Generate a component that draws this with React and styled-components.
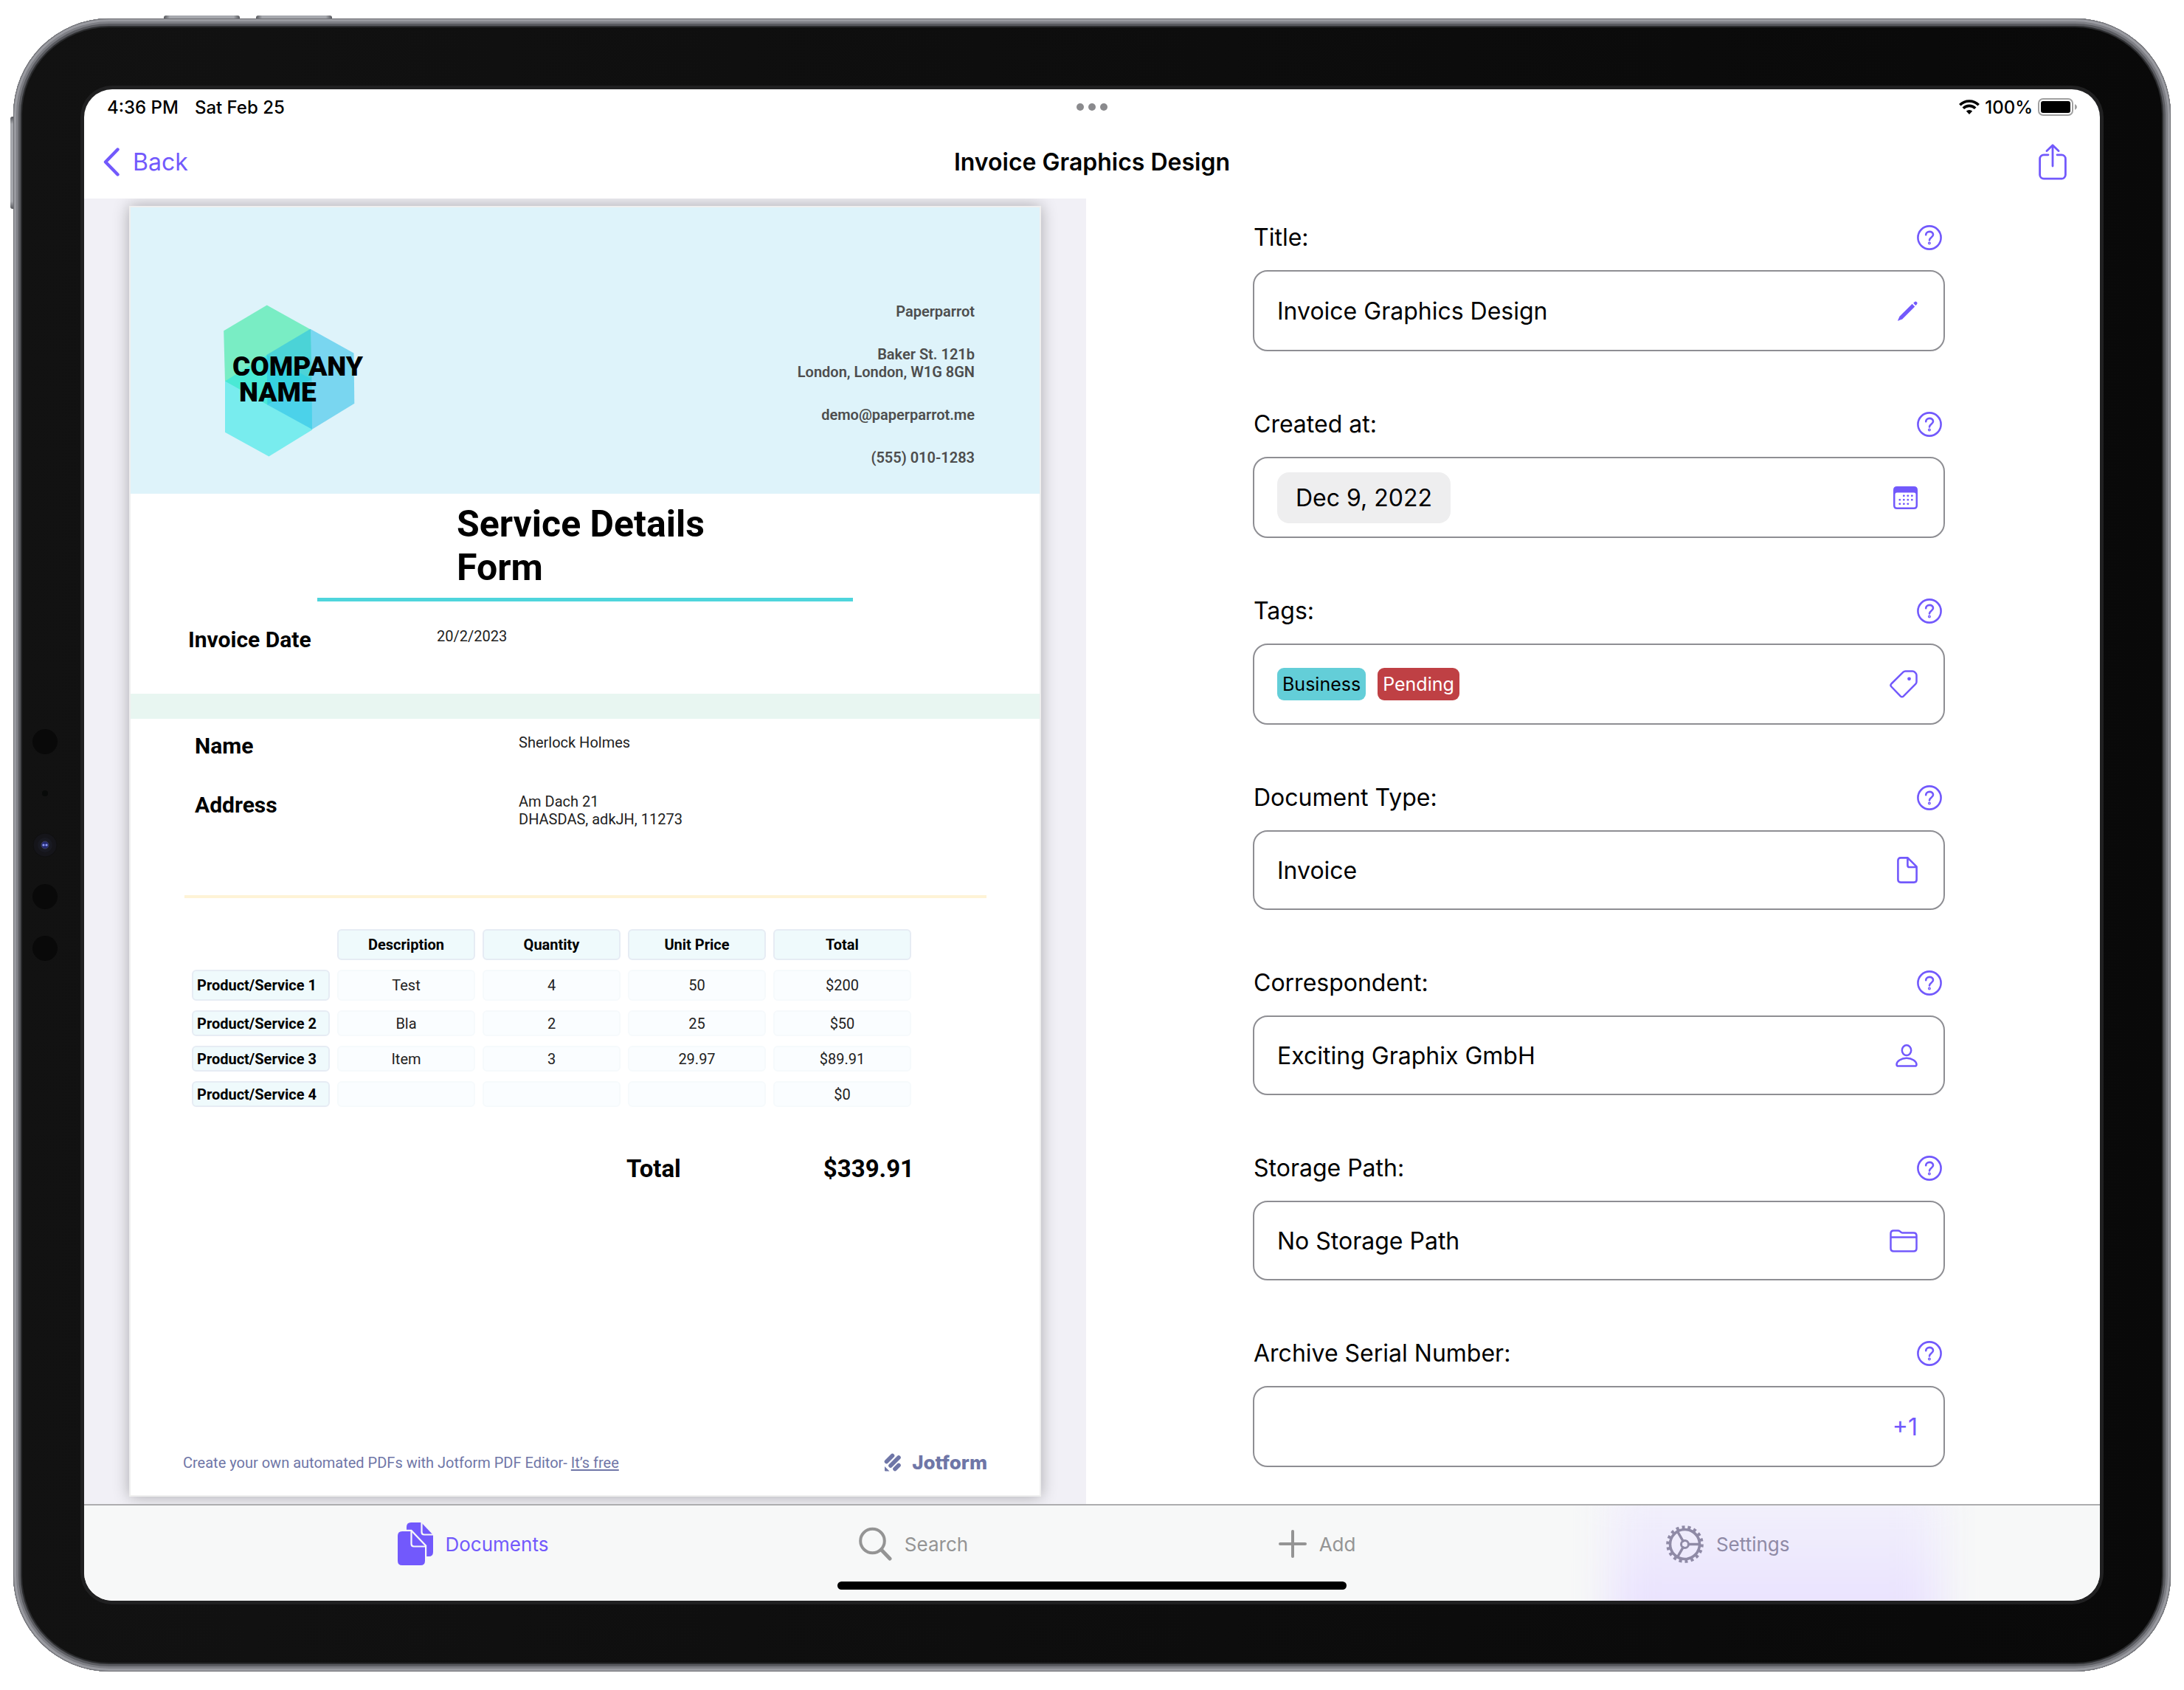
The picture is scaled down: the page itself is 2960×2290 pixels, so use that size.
import React from "react";
import styled, { createGlobalStyle, css } from "styled-components";

const violet = "#7259fc";
const sans = `Inter, "Liberation Sans", sans-serif`;
const print = `Roboto, "Liberation Sans", sans-serif`;

const Global = createGlobalStyle`
  *, *::before, *::after { box-sizing: border-box; }
  body { margin: 0; background: #fff; font-family: ${sans}; color: #000; }
  button, input, select { font: inherit; color: inherit; margin: 0; }
  h1, h2, p, dl, dd, dt { margin: 0; font-weight: inherit; font-size: inherit; }
`;

const plainControl = css`
  appearance: none;
  border: 0;
  padding: 0;
  background: none;
`;

/* ---------- Device ---------- */

const Device = styled.div`
  position: relative;
  display: flex;
  margin: 25px 18px;
  min-height: calc(100vh - 50px);
  padding: 96px;
  border-radius: 130px;
  background: linear-gradient(90deg, #121212, #0e0e0e 45%, #090909);
  box-shadow:
    inset 0 0 0 1px #707176,
    inset 0 0 0 4px #9a9ba1,
    inset 0 0 0 7px #7e7f85,
    inset 0 0 0 10px #5a5b60,
    inset 0 0 0 12px #2b2c2e;
`;

const HardwareKey = styled.span`
  position: absolute;
  background: linear-gradient(90deg, #55565b, #a6a8ad 8%, #a6a8ad 92%, #55565b);
  ${(p) =>
    p.$side === "top"
      ? css`top: -4px; left: ${p.$at}px; width: 103px; height: 4px; border-radius: 3px 3px 0 0;`
      : css`left: -4px; top: ${p.$at}px; width: 4px; height: 125px; border-radius: 3px 0 0 3px;
          background: linear-gradient(#55565b, #a6a8ad 8%, #a6a8ad 92%, #55565b);`}
`;

const Sensors = styled.div`
  position: absolute;
  left: 26px;
  top: 50%;
  transform: translateY(-50%);
  display: flex;
  flex-direction: column;
  gap: 36px;
`;

const Screen = styled.div`
  flex: 1;
  min-width: 0;
  display: flex;
  flex-direction: column;
  overflow: hidden;
  border-radius: 38px;
  background: #fff;
`;

const ScreenEdge = styled.div`
  flex: 1;
  min-width: 0;
  display: flex;
  border-radius: 38px;
  box-shadow: 0 0 0 5px #202021;
`;

/* ---------- Bars ---------- */

const StatusBar = styled.header`
  display: grid;
  grid-template-columns: 1fr auto 1fr;
  align-items: center;
  height: 48px;
  padding: 0 31px;
  font-size: 24px;
  font-weight: 500;
`;

const Cluster = styled.div`
  display: flex;
  align-items: center;
  gap: ${(p) => p.$gap}px;
  justify-self: ${(p) => p.$side || "start"};
`;

const NavBar = styled.nav`
  display: grid;
  grid-template-columns: 1fr auto 1fr;
  align-items: center;
  height: 100px;
  padding: 0 26px;
  font-size: 32px;
`;

const BackButton = styled.button`
  ${plainControl}
  display: flex;
  align-items: center;
  gap: 18px;
  color: ${violet};
`;

const NavTitle = styled.h1`
  && { font-size: 32px; font-weight: 600; }
`;

const IconButton = styled.button`
  ${plainControl}
  display: flex;
  justify-self: end;
  color: ${violet};
`;

const ShareButton = styled(IconButton)`
  margin-right: 19px;
`;

const Body = styled.main`
  flex: 1;
  display: grid;
  grid-template-columns: 1358fr 1374fr;
`;

/* ---------- Document preview ---------- */

const Preview = styled.section`
  display: flex;
  padding: 10px 61px;
  background: #f1f0f6;
  overflow: hidden;
`;

const Sheet = styled.article`
  flex: 1;
  min-width: 0;
  display: flex;
  flex-direction: column;
  border: 2px solid #efefef;
  background: #fff;
  box-shadow: 0 0 20px rgba(0, 0, 0, 0.3);
  font-family: ${print};
  font-size: 20px;
  line-height: 24px;
`;

const Letterhead = styled.div`
  display: flex;
  justify-content: space-between;
  padding: 129px 88px 37px 126px;
  background: #def3fa;
`;

const Logo = styled.div`
  position: relative;
  width: 190px;
  height: 210px;
`;

const LogoText = styled.p`
  position: absolute;
  left: 12px;
  top: 69px;
  display: flex;
  flex-direction: column;
  font-weight: 900;
  font-size: 37px;
  line-height: 35px;
`;

const LogoLine = styled.span`
  padding-left: ${(p) => (p.$indent ? 9 : 0)}px;
`;

const Contact = styled.address`
  display: flex;
  flex-direction: column;
  gap: 34px;
  font-style: normal;
  font-weight: 600;
  text-align: right;
  color: #4d4d4d;
`;

const TitleBlock = styled.div`
  align-self: center;
  width: 726px;
  padding: 12px 0 11px;
  border-bottom: 5px solid #4fd5dc;
`;

const SheetTitle = styled.h2`
  && {
    width: 348px;
    margin: 0 auto;
    font-size: 50px;
    line-height: 59px;
    font-weight: 700;
  }
`;

const Details = styled.dl`
  display: grid;
  grid-template-columns: ${(p) => p.$term}px 1fr;
  row-gap: 46px;
  padding: ${(p) => p.$pad};
`;

const Term = styled.dt`
  && { font-size: 30px; line-height: 34px; font-weight: 700; }
`;

const Value = styled.dd`
  color: #222;
`;

const Band = styled.div`
  height: 34px;
  background: #e8f6f1;
`;

const YellowRule = styled.hr`
  height: 4px;
  margin: 91px 72px 0 73px;
  border: 0;
  background: #fef3d6;
`;

const Items = styled.table`
  width: 995px;
  margin: 29px 0 0 73px;
  table-layout: fixed;
  border-collapse: separate;
  border-spacing: 10px 13px;

  tr { height: 35px; }
  tr.tall { height: 42px; }
  th, td {
    padding: 0;
    border: 2px solid #f6fafc;
    border-radius: 6px;
    background: #fafdff;
    text-align: center;
    vertical-align: middle;
    line-height: 24px;
    font-weight: 400;
    color: #222;
    white-space: nowrap;
  }
  th { background: #effafc; border-color: #e6ecf4; font-weight: 700; color: #000; }
  th[scope="row"] { padding-left: 5px; text-align: left; }
  td.blank { border-color: transparent; background: none; }
`;

const GrandTotal = styled.p`
  display: flex;
  justify-content: space-between;
  width: 390px;
  && { margin: 51px 0 0 672px; font-size: 33px; font-weight: 700; }
  line-height: 40px;
`;

const SheetFooter = styled.footer`
  display: flex;
  align-items: center;
  justify-content: space-between;
  margin-top: auto;
  padding: 0 71px 32px;
  color: #6f76a7;
  a { color: inherit; text-underline-offset: 2px; }
`;

const Jotform = styled.div`
  display: flex;
  align-items: center;
  gap: 13px;
  font-family: ${sans};
  font-size: 26px;
  font-weight: 800;
`;

/* ---------- Form ---------- */

const Form = styled.form`
  display: flex;
  flex-direction: column;
  gap: 82px;
  padding: 36px 210px 50px 226px;
  font-size: 32px;
`;

const Field = styled.div`
  display: flex;
  flex-direction: column;
  gap: 27px;
`;

const FieldHead = styled.div`
  display: flex;
  align-items: center;
  justify-content: space-between;
  height: 34px;
  padding: 0 4px 0 1px;
  line-height: 34px;
`;

const Box = styled.div`
  display: flex;
  align-items: center;
  gap: 16px;
  height: ${(p) => (p.$compact ? 108 : 110)}px;
  padding: 0 35px 0 31px;
  border: 2px solid #8e8e93;
  border-radius: 20px;
`;

const Entry = styled.input`
  ${plainControl}
  flex: 1;
  min-width: 0;
  height: 60px;
  outline: 0;
`;

const DateChip = styled.button`
  ${plainControl}
  height: 69px;
  padding: 0 25px;
  border-radius: 16px;
  background: #eeeeef;
`;

const Tag = styled.span`
  padding: 0 7px;
  border-radius: 9px;
  font-size: 25px;
  line-height: 44px;
  background: ${(p) => p.$bg};
  color: ${(p) => p.$fg};
`;

const BoxAction = styled(IconButton)`
  margin-left: auto;
`;

/* ---------- Tab bar ---------- */

const TabBar = styled.nav`
  position: relative;
  display: flex;
  justify-content: space-evenly;
  height: 131px;
  padding-left: 4px;
  border-top: 2px solid #adadaf;
  background: #f7f8f8;
  overflow: hidden;
`;

const Glow = styled.span`
  position: absolute;
  right: 215px;
  top: -30px;
  width: 450px;
  height: 220px;
  background: linear-gradient(#f2f0fb, #efecfc 35%, #eae3fe 70%);
  filter: blur(26px);
`;

const Tab = styled.a`
  position: relative;
  display: flex;
  align-items: center;
  gap: 17px;
  height: 104px;
  font-size: 26px;
  text-decoration: none;
  color: ${(p) => p.$color};
`;

const HomeIndicator = styled.span`
  position: absolute;
  left: 50%;
  bottom: 15px;
  width: 690px;
  height: 11px;
  transform: translateX(-50%);
  border-radius: 6px;
  background: #000;
`;

/* ---------- Icons ---------- */

const Svg = ({ w, h, sw = 3, children }) => (
  <svg width={w} height={h} viewBox={`0 0 ${w} ${h}`} fill="none" stroke="currentColor"
    strokeWidth={sw} strokeLinecap="round" strokeLinejoin="round" aria-hidden="true">
    {children}
  </svg>
);

const SensorDots = () => (
  <>
    {["dot", "mic", "lens", "dot", "dot"].map((kind, i) => (
      <svg key={i} width="34" height="34" viewBox="0 0 34 34" aria-hidden="true">
        {kind === "dot" && <circle cx="17" cy="17" r="17" fill="#090909" />}
        {kind === "mic" && <circle cx="17" cy="17" r="4" fill="#080a09" />}
        {kind === "lens" && (
          <>
            <circle cx="17" cy="17" r="16" fill="#15151a" stroke="#0f0f10" />
            <circle cx="17" cy="17" r="10" fill="#191a22" />
            <circle cx="17" cy="17" r="5" fill="#252a74" stroke="#3a3d55" />
            <circle cx="15" cy="17" r="1.6" fill="#8d9cf5" />
            <circle cx="19" cy="17" r="1.6" fill="#8d9cf5" />
          </>
        )}
      </svg>
    ))}
  </>
);

const Dots = () => (
  <svg width="42" height="10" viewBox="0 0 42 10" fill="#8a8a8d" aria-hidden="true">
    <circle cx="5" cy="5" r="5" /><circle cx="21" cy="5" r="5" /><circle cx="37" cy="5" r="5" />
  </svg>
);

const Wifi = () => (
  <svg width="28" height="20" viewBox="0 0 28 20" fill="none" stroke="#000" strokeWidth="3.6" aria-hidden="true">
    <path d="M1.3 7.2a18 18 0 0 1 25.4 0" />
    <path d="M5.8 11.8a11.6 11.6 0 0 1 16.4 0" />
    <path d="M14 20l-4.2-4.4a6 6 0 0 1 8.4 0z" fill="#000" stroke="none" />
  </svg>
);

const Battery = () => (
  <svg width="53" height="24" viewBox="0 0 53 24" aria-hidden="true">
    <rect x="1" y="1" width="46" height="22" rx="6" fill="none" stroke="#a0a0a0" strokeWidth="2" />
    <rect x="4" y="4" width="40" height="16" rx="3" fill="#000" />
    <path d="M50 8q3 1.5 3 4t-3 4z" fill="#a0a0a0" />
  </svg>
);

const Chevron = () => <Svg w={22} h={39} sw={4.4}><path d="M19.5 2.5 3 19.5l16.5 17" /></Svg>;

const Share = () => (
  <Svg w={38} h={49} sw={2.8}>
    <path d="M13 14.8H7a5.4 5.4 0 0 0-5.4 5.4v21.6A5.4 5.4 0 0 0 7 47.2h24a5.4 5.4 0 0 0 5.4-5.4V20.2A5.4 5.4 0 0 0 31 14.8h-6M19 30V2M11 9.5 19 1.8l8 7.7" />
  </Svg>
);

const Help = () => (
  <Svg w={34} h={34} sw={2.6}>
    <circle cx="17" cy="17" r="15.6" />
    <path d="M12.2 13.2c0-2.5 2-4.3 4.9-4.3s4.9 1.7 4.9 4.2c0 3.7-5 3.7-5 7.4" />
    <circle cx="16.9" cy="24.6" r="0.7" />
  </Svg>
);

const Pencil = () => (
  <svg width="27" height="27" viewBox="0 0 27 27" fill="currentColor" aria-hidden="true">
    <path d="M19.6 3.8 23.200 7.400 6.200 24.400.8 26.600q-.9.300-.6-.6l2.300-5.200z" />
    <path d="m21.200 2.700 1.500-1.400q1.600-1.500 3.100 0t0 3.100l-1.500 1.500z" />
  </svg>
);

const Calendar = () => (
  <svg width="33" height="31" viewBox="0 0 33 31" fill="currentColor" aria-hidden="true">
    <path fillRule="evenodd" d="M5 0h23q5 0 5 5v21q0 5-5 5H5q-5 0-5-5V5Q0 0 5 0zm0 8.5q-2.500 0-2.500 2.300V26q0 2.500 2.500 2.500h23q2.500 0 2.500-2.500V10.800q0-2.300-2.500-2.300z" />
    {[[13, 13], [18.5, 13], [24, 13], [7.5, 18.5], [13, 18.5], [18.5, 18.5], [24, 18.5], [7.5, 24], [13, 24], [18.5, 24]].map(
      ([x, y]) => <rect key={`${x}-${y}`} x={x} y={y - 1.5} width="2.6" height="2.6" rx="0.8" />
    )}
  </svg>
);

const TagIcon = () => (
  <Svg w={38} h={38} sw={2.5}>
    <path d="M21.5 1.5h9.500q2 0 3.200 1.300l1.200 1.400q1.100 1.200 1.100 3v8.600q0 1.800-1.300 3.100L18.800 35.300q-2 2-4 0L2.400 22.500q-1.900-2 0-4L18.500 2.700q1.200-1.200 3-1.200z" />
    <circle cx="26.5" cy="11.8" r="1.6" fill="currentColor" strokeWidth="1.6" />
  </Svg>
);

const DocIcon = () => (
  <Svg w={28} h={36} sw={2.6}>
    <path d="M5 1.4h9.600L26.600 13.400V31q0 3.600-3.600 3.600H5Q1.400 34.600 1.400 31V5Q1.400 1.400 5 1.400zM14.400 1.600v9.800q0 2.600 2.600 2.600h9.400" />
  </Svg>
);

const Person = () => (
  <Svg w={30} h={31} sw={2.5}>
    <ellipse cx="15" cy="8.2" rx="6.2" ry="6.9" />
    <path d="M15 18.800c7.500 0 13.500 4.500 13.500 8.600 0 1.500-.9 2.200-2.300 2.200H3.800c-1.400 0-2.300-.7-2.300-2.200 0-4.100 6-8.600 13.500-8.600z" />
  </Svg>
);

const Folder = () => (
  <Svg w={38} h={31} sw={2.5}>
    <path d="M1.500 10.500h35M5.500 29.500h27q4 0 4-4V8.500q0-4-4-4H17.800q-1.300 0-2.300-.8l-1.600-1.300q-1.100-.9-2.700-.9H5.500q-4 0-4 4v20q0 4 4 4z" />
  </Svg>
);

const DocumentsIcon = () => (
  <svg width="48" height="58" viewBox="0 0 48 58" fill="currentColor" aria-hidden="true">
    <path d="M18 0h14l16 17v23q0 6-6 6H12V6q0-6 6-6z" />
    <path d="M32.5 0v13q0 3.500 3.500 3.500h12" fill="none" stroke="#f7f8f8" strokeWidth="2.2" />
    <path d="M6 12h12l19 20v20q0 6-6 6H6q-6 0-6-6V18q0-6 6-6z" stroke="#f7f8f8" strokeWidth="4.4" paintOrder="stroke" />
    <path d="M18.5 12v17q0 3.500 3.500 3.500h15" fill="none" stroke="#f7f8f8" strokeWidth="2.2" />
  </svg>
);

const SearchIcon = () => (
  <Svg w={45} h={46} sw={4}>
    <circle cx="18.5" cy="19" r="16.3" /><path d="M30.5 31 42 43" strokeWidth="5" />
  </Svg>
);

const Plus = () => <Svg w={38} h={38} sw={4}><path d="M19 2v34M2 19h34" /></Svg>;

const Gear = () => (
  <Svg w={51} h={51} sw={3.6}>
    <circle cx="25.5" cy="25.5" r="20" />
    <circle cx="25.5" cy="25.5" r="23" strokeWidth="4.6" strokeLinecap="butt" pathLength="36" strokeDasharray="1 1" />
    <circle cx="25.5" cy="25.5" r="5" strokeWidth="3" />
    <path d="M30.5 25.5h15M23 21.2l-7.500-13M23 29.800l-7.500 13" strokeWidth="3.4" />
  </Svg>
);

const JotMark = () => (
  <svg width="25" height="25" viewBox="0 0 25 25" fill="none" stroke="currentColor" strokeWidth="5.6" strokeLinecap="round" aria-hidden="true">
    <path d="M3.500 11.500 11.500 3.500M9 17 20 6M15 21.500l5-5" />
    <path d="M1 18v5.500q0 1 1 1h5.500z" fill="currentColor" stroke="none" />
  </svg>
);

const LogoShapes = () => (
  <svg width="190" height="210" viewBox="303 410 190 210" fillOpacity="0.55" aria-hidden="true">
    <path fill="#26e898" d="M361.700 413.600 421 446.500l1.500 67-60 35L305 516.400 303.200 448.200z" />
    <path fill="#25e6e4" d="M305 516.400 362 481l60.500 33 .500 68.500-58.600 36.100L305 585.700z" />
    <path fill="#26bee8" d="m420.600 445.700 58.900 32.900.8 68.200-57.300 35-60.600-33.200-.8-67.900z" />
  </svg>
);

/* ---------- Content ---------- */

const products = [
  ["Product/Service 1", "Test", "4", "50", "$200"],
  ["Product/Service 2", "Bla", "2", "25", "$50"],
  ["Product/Service 3", "Item", "3", "29.97", "$89.91"],
  ["Product/Service 4", "", "", "", "$0"],
];

const FormField = ({ label, id, compact, children }) => (
  <Field>
    <FieldHead>
      <label htmlFor={id}>{label}:</label>
      <IconButton type="button" aria-label={`About ${label}`}><Help /></IconButton>
    </FieldHead>
    <Box $compact={compact}>{children}</Box>
  </Field>
);

const Picker = ({ id, value }) => (
  <Entry as="select" id={id} defaultValue={value}>
    <option>{value}</option>
  </Entry>
);

export default function App() {
  return (
    <>
      <Global />
      <Device>
        <HardwareKey $side="top" $at={204} />
        <HardwareKey $side="top" $at={329} />
        <HardwareKey $side="left" $at={133} />
        <Sensors><SensorDots /></Sensors>
        <ScreenEdge>
          <Screen>
            <StatusBar>
              <Cluster $gap={22}><span>4:36 PM</span><span>Sat Feb 25</span></Cluster>
              <Dots />
              <Cluster $gap={7} $side="end"><Wifi /><span>100%</span><Battery /></Cluster>
            </StatusBar>
            <NavBar>
              <BackButton type="button"><Chevron />Back</BackButton>
              <NavTitle>Invoice Graphics Design</NavTitle>
              <ShareButton type="button" aria-label="Share"><Share /></ShareButton>
            </NavBar>
            <Body>
              <Preview>
                <Sheet>
                  <Letterhead>
                    <Logo>
                      <LogoShapes />
                      <LogoText>
                        <LogoLine>COMPANY</LogoLine>
                        <LogoLine $indent>NAME</LogoLine>
                      </LogoText>
                    </Logo>
                    <Contact>
                      <p>Paperparrot</p>
                      <p>Baker St. 121b<br />London, London, W1G 8GN</p>
                      <p>demo@paperparrot.me</p>
                      <p>(555) 010-1283</p>
                    </Contact>
                  </Letterhead>
                  <TitleBlock><SheetTitle>Service Details Form</SheetTitle></TitleBlock>
                  <Details $term={337} $pad="35px 72px 56px 78px">
                    <Term>Invoice Date</Term><Value>20/2/2023</Value>
                  </Details>
                  <Band />
                  <Details $term={439} $pad="20px 72px 0 87px">
                    <Term>Name</Term><Value>Sherlock Holmes</Value>
                    <Term>Address</Term><Value>Am Dach 21<br />DHASDAS, adkJH, 11273</Value>
                  </Details>
                  <YellowRule />
                  <Items>
                    <thead>
                      <tr className="tall">
                        <td className="blank" />
                        {["Description", "Quantity", "Unit Price", "Total"].map((h) => <th key={h} scope="col">{h}</th>)}
                      </tr>
                    </thead>
                    <tbody>
                      {products.map(([name, ...cells], r) => (
                        <tr key={name} className={r === 0 ? "tall" : undefined}>
                          <th scope="row">{name}</th>
                          {cells.map((c, i) => <td key={i}>{c}</td>)}
                        </tr>
                      ))}
                    </tbody>
                  </Items>
                  <GrandTotal><span>Total</span><span>$339.91</span></GrandTotal>
                  <SheetFooter>
                    <p>Create your own automated PDFs with Jotform PDF Editor- <a href="#free">It’s free</a></p>
                    <Jotform><JotMark />Jotform</Jotform>
                  </SheetFooter>
                </Sheet>
              </Preview>
              <Form onSubmit={(e) => e.preventDefault()}>
                <FormField label="Title" id="title">
                  <Entry id="title" type="text" defaultValue="Invoice Graphics Design" />
                  <BoxAction type="button" aria-label="Edit title"><Pencil /></BoxAction>
                </FormField>
                <FormField label="Created at" id="created">
                  <DateChip id="created" type="button">Dec 9, 2022</DateChip>
                  <BoxAction type="button" aria-label="Open calendar"><Calendar /></BoxAction>
                </FormField>
                <FormField label="Tags" id="tags">
                  <Tag $bg="#63ced8" $fg="#000">Business</Tag>
                  <Tag $bg="#bf4044" $fg="#fff">Pending</Tag>
                  <BoxAction id="tags" type="button" aria-label="Edit tags"><TagIcon /></BoxAction>
                </FormField>
                <FormField label="Document Type" id="type" compact>
                  <Picker id="type" value="Invoice" />
                  <BoxAction type="button" aria-label="Choose document type"><DocIcon /></BoxAction>
                </FormField>
                <FormField label="Correspondent" id="correspondent" compact>
                  <Picker id="correspondent" value="Exciting Graphix GmbH" />
                  <BoxAction type="button" aria-label="Choose correspondent"><Person /></BoxAction>
                </FormField>
                <FormField label="Storage Path" id="path" compact>
                  <Picker id="path" value="No Storage Path" />
                  <BoxAction type="button" aria-label="Choose storage path"><Folder /></BoxAction>
                </FormField>
                <FormField label="Archive Serial Number" id="serial">
                  <Entry id="serial" type="text" defaultValue="" />
                  <BoxAction type="button">+1</BoxAction>
                </FormField>
              </Form>
            </Body>
            <TabBar>
              <Glow />
              <Tab href="#documents" $color={violet}><DocumentsIcon />Documents</Tab>
              <Tab href="#search" $color="#949494"><SearchIcon />Search</Tab>
              <Tab href="#add" $color="#949494"><Plus />Add</Tab>
              <Tab href="#settings" $color="#8f8aa6"><Gear />Settings</Tab>
              <HomeIndicator />
            </TabBar>
          </Screen>
        </ScreenEdge>
      </Device>
    </>
  );
}
